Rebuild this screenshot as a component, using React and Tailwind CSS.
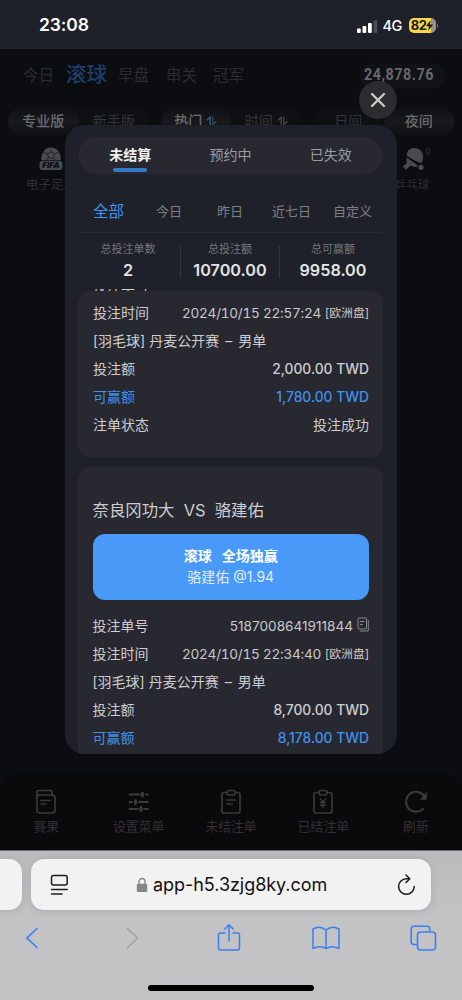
import React from "react";

const sportTabs = [
  { label: "今日", className: "w-[32px] text-[15.5px] text-[#2b2c2f]" },
  { label: "滚球", className: "ml-[11px] w-[42px] text-[20.5px] font-medium text-[#1b4069]" },
  { label: "早盘", className: "ml-[10px] w-[32px] text-[15.5px] text-[#2b2c2f]" },
  { label: "串关", className: "ml-[16px] w-[32px] text-[15.5px] text-[#2b2c2f]" },
  { label: "冠军", className: "ml-[15px] w-[32px] text-[15.5px] text-[#2b2c2f]" },
];

const modalTabs = ["未结算", "预约中", "已失效"];

const filters = [
  { label: "全部", className: "text-[15.5px] text-[#4593ed]" },
  { label: "今日", className: "ml-[32px] text-[13px] text-[#7e8084]" },
  { label: "昨日", className: "ml-[35px] text-[13px] text-[#7e8084]" },
  { label: "近七日", className: "ml-[29px] text-[13px] text-[#7e8084]" },
  { label: "自定义", className: "ml-[22px] text-[13px] text-[#7e8084]" },
];

const bets = {
  first: {
    time: "2024/10/15 22:57:24",
    league: "[羽毛球] 丹麦公开赛",
    event: "男单",
    stake: "2,000.00 TWD",
    win: "1,780.00 TWD",
  },
  second: {
    id: "5187008641911844",
    time: "2024/10/15 22:34:40",
    league: "[羽毛球] 丹麦公开赛",
    event: "男单",
    stake: "8,700.00 TWD",
    win: "8,178.00 TWD",
  },
};

const SortIcon = ({ active }) => (
  <svg className="h-[10px] w-[11px]" viewBox="0 0 11 10" fill="none" strokeWidth="1.4">
    <path d="M0.6 4.4 L4.2 1.2 V9.5" stroke={active ? "#265a92" : "#424346"} />
    <path d="M6.8 0.5 V8.6 L10.4 5.2" stroke="#424346" />
  </svg>
);

const StatusBar = () => (
  <header className="flex h-[49px] shrink-0 items-center justify-between bg-[#1e2129] pl-[39px] pr-[24px] pt-[2px]">
    <span className="text-[17.5px] font-semibold tracking-[-0.1px] text-white">23:08</span>
    <div className="flex items-center">
      <svg className="h-[16px] w-[22px]" viewBox="0 0 22 16">
        <rect x="1" y="10.5" width="3.8" height="4.5" rx="1" fill="#fff" />
        <rect x="6.5" y="8" width="3.8" height="7" rx="1" fill="#fff" />
        <rect x="12" y="5" width="3.8" height="10" rx="1" fill="#fff" />
        <rect x="17.5" y="2.3" width="3.8" height="12.7" rx="1" fill="#4b4d54" />
      </svg>
      <span className="ml-[5px] w-[20px] text-[14.5px] font-medium tracking-[-0.5px] text-white">4G</span>
      <div className="ml-[6px] flex h-[15px] w-[27px] items-center justify-center rounded-[5px] bg-[linear-gradient(90deg,#f8d748_82%,#93948f_82%)] text-[13px] font-bold tracking-[-0.5px] text-[#1b1a10]">
        82
        <svg className="h-[11px] w-[7px]" viewBox="0 0 7 11" fill="#1b1a10">
          <path d="M4.6 0 L0 6.2 H2.9 L2.2 11 L7 4.6 H4 Z" />
        </svg>
      </div>
      <span className="ml-[1px] h-[4px] w-[1.5px] rounded-r bg-[#77787c]" />
    </div>
  </header>
);

const Switcher = ({ left, right, active, sort }) => {
  const on = "bg-[linear-gradient(#101114,#18191c_50%,#101114)] text-[#6b6c6f] font-medium";
  const off = "text-[#343538]";
  return (
    <div className="flex h-[27px] w-[141px] rounded-full bg-[#0f1013] text-[14px]">
      <div className={`flex flex-1 items-center justify-center gap-[4px] rounded-full pb-[2px] ${active === 0 ? on : off}`}>
        {left}
        {sort && <SortIcon active />}
      </div>
      <div className={`flex flex-1 items-center justify-center gap-[4px] rounded-full pb-[2px] ${active === 1 ? on : off}`}>
        {right}
        {sort && <SortIcon />}
      </div>
    </div>
  );
};

const SportIcons = () => (
  <div className="flex justify-between pl-[27px] pr-[31px] pt-[12px] text-[12.5px] text-[#2d2e31]">
    <div className="flex w-[48px] flex-col items-center">
      <svg className="h-[24px] w-[24px]" viewBox="0 0 24 24">
        <path d="M2.2 13.2 C2.200 5 6.500 0.500 12 0.500 C17.500 0.500 21.800 5 21.800 13.200 Z" fill="#494b51" />
        <path
          d="M12 2.800 V5 M8.500 7 L12 5 L15.500 7 L14.500 11 H9.500 Z M8.500 7 L4.500 5.500 M15.500 7 L19.500 5.500 M9.500 11 L7.500 13 M14.500 11 L16.500 13"
          fill="none"
          stroke="#1a1b20"
          strokeWidth="0.900"
        />
        <rect x="0.500" y="14" width="23" height="9" rx="3" fill="#494b51" />
        <text x="12" y="21.4" fontSize="8" fontWeight="900" fontStyle="italic" textAnchor="middle" fill="#0d0e12">
          FIFA
        </text>
      </svg>
      <span className="mt-[5px] whitespace-nowrap leading-[18px]">电子足球</span>
    </div>
    <div className="flex w-[38px] flex-col items-center">
      <div className="flex">
        <svg className="ml-[9px] h-[24px] w-[23px]" viewBox="0 0 23 24">
          <path d="M5 10 C3.500 4.500 8 1 12.500 1 C19 1 23.500 7.500 19.500 16.500 Z" fill="#494b51" />
          <path d="M4.800 10.500 L16.500 19 C12 21.500 9.500 18 8 19 L4 22.800 L0.800 19.500 L5 16 C4.500 14 4 12.500 4.800 10.500 Z" fill="#494b51" />
          <path d="M4 8.800 L19 19" stroke="#0d0e12" strokeWidth="1.200" />
          <circle cx="19" cy="20" r="3.400" fill="#0d0e12" />
          <circle cx="19" cy="20.300" r="2.600" fill="#494b51" />
        </svg>
        <span className="text-[9px] leading-[10px]">9</span>
      </div>
      <span className="mt-[5px] whitespace-nowrap text-[11.5px] leading-[18px]">乒乓球</span>
    </div>
  </div>
);

const BottomNav = () => (
  <nav className="grid h-[77px] shrink-0 grid-cols-5 rounded-t-[20px] bg-[#0a0a0c] pt-[15px] text-[12.8px] text-[#303133]">
    <div className="flex flex-col items-center">
      <svg className="h-[28px] w-[24px]" viewBox="0 0 24 28" fill="none" stroke="#3a3a3d" strokeWidth="1.7" strokeLinecap="round">
        <rect x="3" y="7" width="18" height="18" rx="2.500" />
        <path d="M3 9 V4.500 Q3 2.500 5 2.500 H16 Q18 2.500 18 4.500 V7 M7 12.500 H16 M7 16 H12" />
      </svg>
      <span className="mt-px leading-[20px]">赛果</span>
    </div>
    <div className="flex flex-col items-center">
      <svg className="h-[28px] w-[24px]" viewBox="0 0 24 28" fill="none" stroke="#3a3a3d" strokeWidth="1.8" strokeLinecap="round">
        <path d="M2.500 6.500 H13 M19 6.500 H21 M2.500 14 H5 M12 14 H21 M2.500 21 H11 M17 21 H21" />
        <path d="M15.500 5 V8 M8.500 12.500 V15.500 M14 19.500 V22.500" strokeWidth="3" />
      </svg>
      <span className="mt-px leading-[20px]">设置菜单</span>
    </div>
    <div className="flex flex-col items-center">
      <svg className="h-[28px] w-[24px]" viewBox="0 0 24 28" fill="none" stroke="#3a3a3d" strokeWidth="1.7" strokeLinecap="round">
        <path d="M8 4.500 H5 Q3 4.500 3 6.500 V23 Q3 25 5 25 H19 Q21 25 21 23 V6.500 Q21 4.500 19 4.500 H16" />
        <rect x="8" y="2.500" width="8" height="4.500" rx="2" />
        <path d="M8 12 H16 M8 16 H13" />
      </svg>
      <span className="mt-px leading-[20px]">未结注单</span>
    </div>
    <div className="flex flex-col items-center">
      <svg className="h-[28px] w-[24px]" viewBox="0 0 24 28" fill="none" stroke="#3a3a3d" strokeWidth="1.7" strokeLinecap="round">
        <path d="M8 4.500 H5 Q3 4.500 3 6.500 V23 Q3 25 5 25 H19 Q21 25 21 23 V6.500 Q21 4.500 19 4.500 H16" />
        <rect x="8" y="2.500" width="8" height="4.500" rx="2" />
        <path d="M9.500 11 L12 14 L14.500 11 M12 14 V20 M9.500 14.500 H14.500 M9.500 17.200 H14.500" strokeWidth="1.400" />
      </svg>
      <span className="mt-px leading-[20px]">已结注单</span>
    </div>
    <div className="flex flex-col items-center">
      <svg className="h-[28px] w-[24px]" viewBox="0 0 24 28" fill="none" stroke="#3a3a3d" strokeWidth="2" strokeLinecap="round">
        <path d="M19 21 A10 10 0 1 1 20.500 8.500" />
        <path d="M22.500 4.500 V11.500 H16.500 Z" fill="#3a3a3d" strokeWidth="0.500" />
      </svg>
      <span className="mt-px leading-[20px]">刷新</span>
    </div>
  </nav>
);

const Row = ({ label, children, className = "" }) => (
  <div className={`flex h-[28px] items-center justify-between whitespace-nowrap text-[14px] ${className}`}>
    <span className="pb-px">{label}</span>
    <span className="flex items-center">{children}</span>
  </div>
);

const TimeRow = ({ time }) => (
  <Row label="投注时间">
    <span className="text-[13.600px] tracking-[-0.270px] tabular-nums text-[#c9c9cc]">{time}</span>
    <span className="ml-[4px] pt-px text-[11.800px] text-[#c9c9cc]">[欧洲盘]</span>
  </Row>
);

const MatchRow = ({ bet }) => (
  <Row
    label={
      <>
        {bet.league}
        <span className="mx-[6px]">–</span>
        {bet.event}
      </>
    }
  />
);

const AmountRows = ({ bet }) => (
  <>
    <Row label="投注额">
      <span className="text-[13.800px] font-medium">{bet.stake}</span>
    </Row>
    <Row label="可赢额" className="text-[#4190ec]">
      <span className="text-[13.800px] font-medium">{bet.win}</span>
    </Row>
  </>
);

const Stat = ({ label, value, className }) => (
  <div className={`flex flex-col items-center ${className}`}>
    <span className="text-[11px] leading-[16px] text-[#75777b]">{label}</span>
    <span className="mt-[2px] text-[16.200px] font-semibold leading-[22px] text-[#e3e4e5]">{value}</span>
  </div>
);

const BetsModal = () => (
  <div className="absolute left-[65px] top-[81px] flex w-[332px] flex-col">
    <button type="button" className="flex h-[38px] w-[38px] items-center justify-center self-end rounded-full bg-[#2c2c2e]">
      <svg className="h-[16px] w-[16px]" viewBox="0 0 16 16" stroke="#c8c8c9" strokeWidth="2.400" strokeLinecap="round">
        <path d="M2 2 L14 14 M14 2 L2 14" />
      </svg>
    </button>
    <section className="mt-[6px] flex h-[629px] flex-col overflow-hidden rounded-[20px] bg-[#1e2129] pl-[13px] pr-[14px] pt-[12px]">
      <div className="grid h-[37px] shrink-0 grid-cols-3 rounded-full bg-[#282830] px-[2px] text-[14px] text-[#9c9da1]">
        {modalTabs.map((tab, index) => (
          <div key={tab} className="flex flex-col items-center pt-[8px]">
            <span className={index === 0 ? "font-bold leading-[20px] text-[#f0f0f1]" : "leading-[20px]"}>{tab}</span>
            {index === 0 && <span className="mt-[3px] h-[3.500px] w-[34px] rounded-full bg-[#357ac9]" />}
          </div>
        ))}
      </div>

      <div className="flex h-[59px] shrink-0 items-center border-b border-[#272a32] pl-[15px] pt-[17px]">
        {filters.map((filter) => (
          <span key={filter.label} className={`whitespace-nowrap ${filter.className}`}>
            {filter.label}
          </span>
        ))}
      </div>

      <div className="flex h-[56px] shrink-0 pt-[8px]">
        <Stat label="总投注单数" value="2" className="w-[102px] pr-[2px]" />
        <span className="mt-[5px] h-[32px] w-px self-start bg-[#34363e]" />
        <Stat label="总投注额" value="10700.00" className="w-[98px]" />
        <span className="mt-[5px] h-[32px] w-px self-start bg-[#34363e]" />
        <Stat label="总可赢额" value="9958.00" className="w-[103px] pl-[3px]" />
      </div>

      <div className="flex flex-col text-[#cdcdd0]">
        <div className="flex h-[4px] items-end overflow-hidden pl-[15px] text-[14px] leading-[20px]">
          <span className="-mb-[3px] shrink-0">投注单号</span>
        </div>
        <article className="-mt-[2px] h-[166px] shrink-0 rounded-[12px] bg-[#282830] pl-[15px] pr-[14px] pt-[8px]">
          <TimeRow time={bets.first.time} />
          <MatchRow bet={bets.first} />
          <AmountRows bet={bets.first} />
          <Row label="注单状态">
            <span className="pb-px">投注成功</span>
          </Row>
        </article>

        <article className="mt-[10px] shrink-0 rounded-t-[12px] bg-[#282830] pb-[10px] pl-[14.500px] pr-[14px] pt-[27px]">
          <h3 className="whitespace-pre text-[16.400px] leading-[32px]">奈良冈功大  VS  骆建佑</h3>
          <div className="mt-[8px] flex h-[66px] flex-col items-center justify-center rounded-[12px] bg-[#4899f8] pb-[3px] text-[14px] leading-[21px] text-white">
            <span className="whitespace-pre font-bold">滚球   全场独赢</span>
            <span className="text-[#e0eefe]">骆建佑 @1.94</span>
          </div>
          <div className="pt-[12px]">
            <Row label="投注单号">
              <span className="text-[13.600px] text-[#c9c9cc]">{bets.second.id}</span>
              <svg className="mb-[3px] ml-[4px] h-[15px] w-[12px]" viewBox="0 0 12 15" fill="none" stroke="#85868b" strokeWidth="1">
                <rect x="1" y="1" width="8.500" height="11" rx="1" />
                <path d="M3 4.500 H7.500 M3 7.500 H6 M11.300 3 V14 H3" />
              </svg>
            </Row>
            <TimeRow time={bets.second.time} />
            <MatchRow bet={bets.second} />
            <AmountRows bet={bets.second} />
          </div>
        </article>
      </div>
    </section>
  </div>
);

const BrowserBar = () => (
  <footer className="flex h-[150px] shrink-0 flex-col border-t border-[#6c6a6e] bg-[linear-gradient(#bbbbbd,#c3c3c5_45%)]">
    <div className="mt-[8px] flex h-[51px] shrink-0 gap-[9px]">
      <div className="w-[22px] rounded-r-[13px] bg-[#f2f2f3] shadow-[0_1px_8px_rgba(0,0,0,0.12)]" />
      <div className="flex w-[400px] items-center rounded-[13px] bg-[#f2f2f3] pl-[19px] pr-[15px] shadow-[0_1px_8px_rgba(0,0,0,0.12)]">
        <svg className="h-[22px] w-[19px]" viewBox="0 0 19 22" fill="none" stroke="#1c1c1d" strokeWidth="1.500" strokeLinecap="round">
          <rect x="1.500" y="1.500" width="15.700" height="9.500" rx="2" />
          <path d="M1.500 15.500 H17.200 M1.500 20 H12" />
        </svg>
        <svg className="ml-[67px] h-[16px] w-[12px]" viewBox="0 0 12 16">
          <path d="M3 8 V4.500 A3 3 0 0 1 9 4.500 V8" fill="none" stroke="#858589" strokeWidth="1.300" />
          <rect x="0.800" y="6.800" width="10.400" height="8.200" rx="1.300" fill="#858589" />
        </svg>
        <span className="ml-[5px] text-[18px] tracking-[-0.050px] text-[#111]">app-h5.3zjg8ky.com</span>
        <svg className="ml-auto h-[22px] w-[19px]" viewBox="0 0 19 22" fill="none" stroke="#1c1c1d" strokeWidth="1.500" strokeLinecap="round" strokeLinejoin="round">
          <path d="M17.200 12.500 A7.800 7.800 0 1 1 9.400 4.700 H12.800 M9 1 L12.800 4.700 L9 8.500" />
        </svg>
      </div>
    </div>
    <div className="flex h-[56px] shrink-0 items-center pl-[25px] text-[#3b7ff3]">
      <svg className="h-[28px] w-[15px]" viewBox="0 0 15 28" fill="none" stroke="currentColor" strokeWidth="1.700" strokeLinecap="round">
        <path d="M12 4.500 L2 14 L12 23.500" />
      </svg>
      <svg className="ml-[85px] h-[28px] w-[15px]" viewBox="0 0 15 28" fill="none" stroke="#a1a1a3" strokeWidth="1.500" strokeLinecap="round">
        <path d="M2.500 4.500 L12.500 14 L2.500 23.500" />
      </svg>
      <svg className="ml-[77px] h-[30px] w-[24px]" viewBox="0 0 24 30" fill="none" stroke="currentColor" strokeWidth="1.500" strokeLinecap="round" strokeLinejoin="round">
        <path d="M8 10 H3.500 Q1.500 10 1.500 12 V25 Q1.500 27 3.500 27 H20.500 Q22.500 27 22.500 25 V12 Q22.500 10 20.500 10 H16 M12 18 V2 M7.800 6 L12 1.800 L16.200 6" />
      </svg>
      <svg className="ml-[71px] h-[26px] w-[28px]" viewBox="0 0 28 26" fill="none" stroke="currentColor" strokeWidth="1.500" strokeLinejoin="round">
        <path d="M14 5 Q8 0 1 4 V23.500 Q8 20 14 23.500 Q20 20 27 23.500 V4 Q20 0 14 5 V23.500" />
      </svg>
      <svg className="ml-[70px] h-[28px] w-[27px]" viewBox="0 0 27 28" fill="none" stroke="currentColor" strokeWidth="1.600">
        <rect x="7.500" y="8" width="18" height="18" rx="3" />
        <path d="M7 20.500 H4 Q1.200 20.500 1.200 17.700 V5 Q1.200 2.200 4 2.200 H17 Q19.800 2.200 19.800 5 V7.500" />
      </svg>
    </div>
    <div className="mt-[19px] h-[5.500px] w-[166px] self-center rounded-full bg-black" />
  </footer>
);

const App = () => (
  <div className="relative flex h-[1000px] w-[462px] flex-col overflow-hidden bg-[#0c0d11] font-['Inter','Noto_Sans_CJK_SC',sans-serif]">
    <StatusBar />
    <main className="flex flex-1 flex-col">
      <div className="flex h-[52px] items-center pl-[23px] pr-[17px] pt-px">
        {sportTabs.map((tab) => (
          <span key={tab.label} className={`whitespace-nowrap ${tab.className}`}>
            {tab.label}
          </span>
        ))}
        <div className="ml-auto flex h-[26px] w-[85px] items-center rounded-full bg-[#111216] pl-[4px]">
          <span className="origin-left scale-x-[0.87] font-['Roboto'] text-[16.500px] font-bold tracking-[0.600px] text-[#66676a]">24,878.76</span>
        </div>
      </div>
      <div className="mt-[7px] flex justify-between px-[8px]">
        <Switcher left="专业版" right="新手版" active={0} />
        <Switcher left="热门" right="时间" active={0} sort />
        <Switcher left="日间" right="夜间" active={1} />
      </div>
      <SportIcons />
      <div className="flex-1" />
      <BottomNav />
    </main>
    <BrowserBar />
    <BetsModal />
  </div>
);

export default App;
